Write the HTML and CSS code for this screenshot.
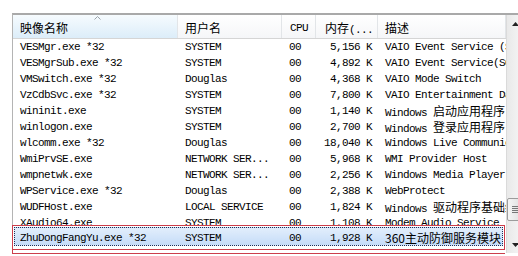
FILE: index.html
```html
<!DOCTYPE html>
<html lang="zh-CN">
<head>
  <meta charset="UTF-8" />
  <title>Windows 任务管理器 - 进程</title>
  <link rel="stylesheet" href="styles.css">
</head>
<body>
  <div class="list">
    <div class="table">
      <div class="head">
        <div class="hd sorted"><span class="zh">映像名称</span>
          <svg class="sort-arrow" width="7" height="4" viewBox="0 0 7 4"><path d="M0.5 3.5 L3.5 0.5 L6.5 3.5" fill="none" stroke="#9aa3ab"/></svg>
        </div>
        <div class="hd"><span class="zh">用户名</span></div>
        <div class="hd cpu">CPU</div>
        <div class="hd mem"><span class="zh">内存</span>(...</div>
        <div class="hd"><span class="zh">描述</span></div>
      </div>

      <div class="row"><div>VESMgr.exe *32</div><div>SYSTEM</div><div>00</div><div class="mem">5,156 K</div><div>VAIO Event Service (SONY)</div></div>
      <div class="row"><div>VESMgrSub.exe *32</div><div>SYSTEM</div><div>00</div><div class="mem">4,892 K</div><div>VAIO Event Service(SONY)</div></div>
      <div class="row"><div>VMSwitch.exe *32</div><div>Douglas</div><div>00</div><div class="mem">4,368 K</div><div>VAIO Mode Switch</div></div>
      <div class="row"><div>VzCdbSvc.exe *32</div><div>SYSTEM</div><div>00</div><div class="mem">7,800 K</div><div>VAIO Entertainment Database Service</div></div>
      <div class="row"><div>wininit.exe</div><div>SYSTEM</div><div>00</div><div class="mem">1,140 K</div><div>Windows <span class="zh">启动应用程序</span></div></div>
      <div class="row"><div>winlogon.exe</div><div>SYSTEM</div><div>00</div><div class="mem">2,700 K</div><div>Windows <span class="zh">登录应用程序</span></div></div>
      <div class="row"><div>wlcomm.exe *32</div><div>Douglas</div><div>00</div><div class="mem">18,040 K</div><div>Windows Live Communications Platform</div></div>
      <div class="row"><div>WmiPrvSE.exe</div><div>NETWORK SER...</div><div>00</div><div class="mem">5,968 K</div><div>WMI Provider Host</div></div>
      <div class="row"><div>wmpnetwk.exe</div><div>NETWORK SER...</div><div>00</div><div class="mem">2,256 K</div><div>Windows Media Player Network Sharing Service</div></div>
      <div class="row"><div>WPService.exe *32</div><div>Douglas</div><div>00</div><div class="mem">2,388 K</div><div>WebProtect</div></div>
      <div class="row"><div>WUDFHost.exe</div><div>LOCAL SERVICE</div><div>00</div><div class="mem">1,824 K</div><div>Windows <span class="zh">驱动程序基础结构</span></div></div>
      <div class="row"><div>XAudio64.exe</div><div>SYSTEM</div><div>00</div><div class="mem">1,108 K</div><div>Modem Audio Service</div></div>
      <div class="row sel"><div>ZhuDongFangYu.exe *32</div><div>SYSTEM</div><div>00</div><div class="mem">1,928 K</div><div><span class="zh">360主动防御服务模块</span></div></div>

      <!-- red marker drawn over the selected process -->
      <div class="redbox"></div>
    </div>

    <div class="vscroll">
      <div class="sb-btn">
        <svg width="7" height="4" viewBox="0 0 7 4"><path d="M0 4 L3.5 0 L7 4 Z" fill="#222"/></svg>
      </div>
      <div class="sb-track">
        <div class="sb-thumb"><span></span><span></span><span></span><span></span></div>
      </div>
      <div class="sb-btn">
        <svg width="7" height="4" viewBox="0 0 7 4"><path d="M0 0 L7 0 L3.5 4 Z" fill="#222"/></svg>
      </div>
    </div>
  </div>
</body>
</html>
```

FILE: styles.css
```css
* { box-sizing: border-box; }
html, body {
  margin: 0; height: 100%;
  overflow: hidden; background: #fff;
}
body {
  font-family: "Liberation Mono", "Noto Sans CJK SC", monospace;
  font-size: 11px; color: #000;
}
.zh {
  font-family: "Noto Sans CJK SC", sans-serif;
  font-size: 12px; letter-spacing: 0;
}

.list {
  display: flex;
  margin: 13px 0 0 12px;
  width: 530px; height: 240px;
  border-top: 2px solid #a9a9a9;
  border-left: 1px solid #b4b4b4;
}
.table { position: relative; width: 493px; flex: none; }

/* header */
.head {
  display: grid;
  grid-template-columns: 165px 104px 34px 62px 128px;
  height: 24px;
  border-bottom: 1px solid #d5d5d5;
}
.hd {
  position: relative;
  padding: 5px 0 0 7px; line-height: 16px;
  border-right: 1px solid #e2e5e8;
  background: linear-gradient(#fff, #f5f6f8);
  white-space: nowrap; overflow: hidden;
  letter-spacing: -0.6px;
}
.hd.sorted { background: linear-gradient(#f6fbfe, #dcedf9); }
.hd.cpu { padding-left: 8px; }
.hd.mem { padding-left: 9px; }
.sort-arrow { position: absolute; left: 81px; top: 1px; }

/* rows */
.row {
  display: grid;
  grid-template-columns: 165px 104px 34px 62px 128px;
  height: 16px; line-height: 16px;
}
.row > div {
  padding-left: 7px;
  white-space: nowrap; overflow: hidden;
  letter-spacing: -0.6px;
}
.row > div.mem { text-align: right; padding: 0 6px 0 0; }

.row.sel {
  position: relative; z-index: 1;
  height: 20px; margin-top: -5px; padding-top: 4px;
  background: #fff;
}
.row.sel::before {
  content: "";
  position: absolute; top: 1px; bottom: 0; left: 1px; right: 3px;
  z-index: -1;
  background: linear-gradient(#e2eefc, #c5dcf8);
  border: 1px dotted #1d3159;
}

.redbox {
  position: absolute; z-index: 2;
  left: -1px; top: 210px;
  width: 493px; height: 29px;
  border-left: 1px solid #cc3d4b;
  border-bottom: 1px solid #cc3d4b;
}
.redbox::before {
  content: "";
  position: absolute; left: -1px; top: 0; right: 0;
  height: 23px;
  border: 1px solid #cc3d4b;
}

/* scrollbar */
.vscroll {
  width: 17px; flex: none;
  display: flex; flex-direction: column;
  border-left: 1px solid #dadada;
  background: linear-gradient(90deg, #e9e9e9, #f6f6f6);
}
.sb-btn {
  height: 17px; flex: none;
  display: flex; align-items: center; justify-content: center;
}
.sb-track { flex: 1; }
.sb-thumb {
  margin-top: 166px; height: 23px;
  border: 1px solid #9c9c9c; border-radius: 2px;
  background: linear-gradient(90deg, #f5f5f5, #dedede);
  display: flex; flex-direction: column;
  align-items: center; justify-content: center; gap: 1px;
}
.sb-thumb span { width: 7px; height: 1px; background: #777; }
```
